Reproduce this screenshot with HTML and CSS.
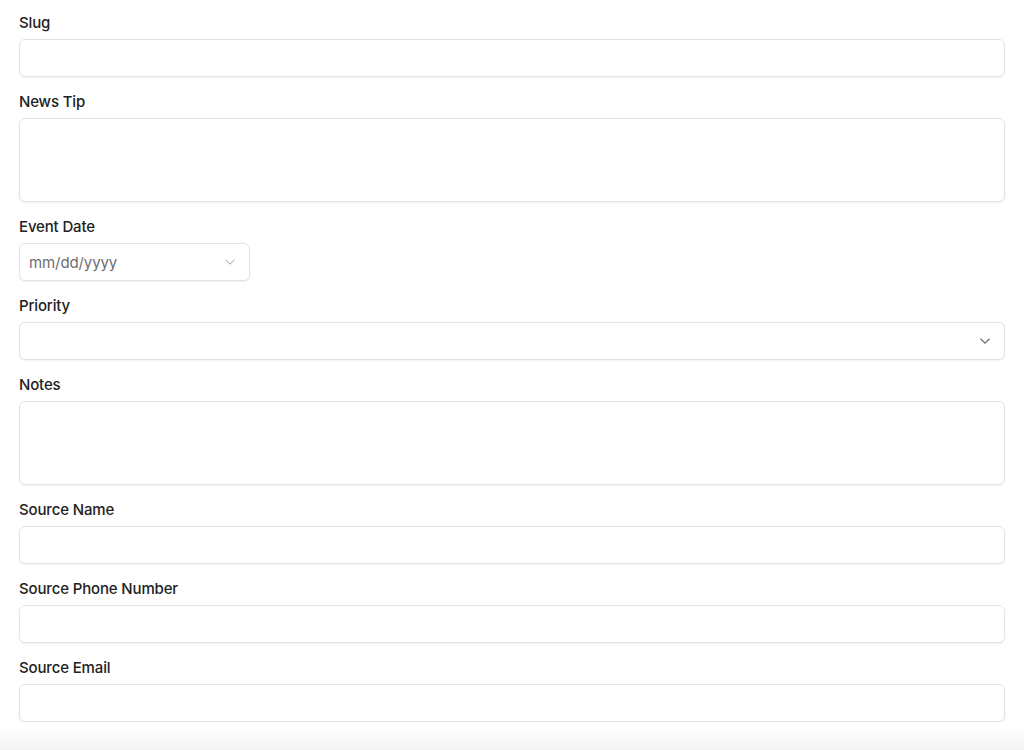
FILE: index.html
```html
<!DOCTYPE html>
<html lang="en">
<head>
    <meta charset="UTF-8">
    <meta name="viewport" content="width=device-width, initial-scale=1.0">
    <title>News Tip</title>
    <link rel="stylesheet" href="styles.css">
</head>
<body>
    <form class="tip-form">
        <div class="field">
            <label for="slug">Slug</label>
            <input type="text" id="slug" class="text-input">
        </div>

        <div class="field">
            <label for="tip">News Tip</label>
            <textarea id="tip" class="text-area"></textarea>
        </div>

        <div class="field">
            <label for="eventDate">Event Date</label>
            <div class="date-input" id="eventDate">
                <span class="placeholder">mm/dd/yyyy</span>
                <svg class="chevron" width="12" height="8" viewBox="0 0 12 8"><path d="M1.5 1.8l4.5 4.4 4.5-4.4" fill="none" stroke="#9a9a9f" stroke-width="1"/></svg>
            </div>
        </div>

        <div class="field">
            <label for="priority">Priority</label>
            <div class="select-input" id="priority">
                <svg class="chevron" width="12" height="8" viewBox="0 0 12 8"><path d="M1.5 1.8l4.5 4.4 4.5-4.4" fill="none" stroke="#6b6b70" stroke-width="1.2"/></svg>
            </div>
        </div>

        <div class="field">
            <label for="notes">Notes</label>
            <textarea id="notes" class="text-area"></textarea>
        </div>

        <div class="field">
            <label for="sourceName">Source Name</label>
            <input type="text" id="sourceName" class="text-input">
        </div>

        <div class="field">
            <label for="sourcePhone">Source Phone Number</label>
            <input type="text" id="sourcePhone" class="text-input">
        </div>

        <div class="field">
            <label for="sourceEmail">Source Email</label>
            <input type="text" id="sourceEmail" class="text-input">
        </div>
    </form>

    <div class="bottom-fade"></div>
</body>
</html>
```

FILE: styles.css
```css
body {
    margin: 0;
    font-family: Inter, "Noto Sans", sans-serif;
    background-color: #fff;
    color: #222;
}

.tip-form {
    display: flex;
    flex-direction: column;
    gap: 14px;
    padding: 12px 19px 0 19px;
}

.field {
    display: flex;
    flex-direction: column;
}

.field label {
    font-size: 15px;
    font-weight: 500;
    line-height: 22px;
    margin-bottom: 5px;
    letter-spacing: -0.15px;
    color: #222;
}

.text-input,
.text-area,
.date-input,
.select-input {
    box-sizing: border-box;
    border: 1px solid #e3e3e5;
    border-radius: 6px;
    background-color: #fff;
    box-shadow: 0 1px 2px rgba(0, 0, 0, 0.06);
    font-family: inherit;
    font-size: 15px;
    margin: 0;
}

.text-input {
    width: 986px;
    height: 38px;
    padding: 0 9px;
}

.text-area {
    width: 986px;
    height: 84px;
    padding: 8px 9px;
    resize: none;
}

.date-input {
    width: 231px;
    height: 38px;
    display: flex;
    align-items: center;
    justify-content: space-between;
    padding: 0 13px 0 9px;
}

.placeholder {
    color: #6e6e73;
    letter-spacing: -0.1px;
}

.select-input {
    width: 986px;
    height: 38px;
    display: flex;
    align-items: center;
    justify-content: flex-end;
    padding: 0 13px;
}

.bottom-fade {
    position: fixed;
    left: 0;
    right: 0;
    bottom: 0;
    height: 22px;
    background: linear-gradient(to bottom, rgba(245, 245, 245, 0), #f2f2f2);
}
```
